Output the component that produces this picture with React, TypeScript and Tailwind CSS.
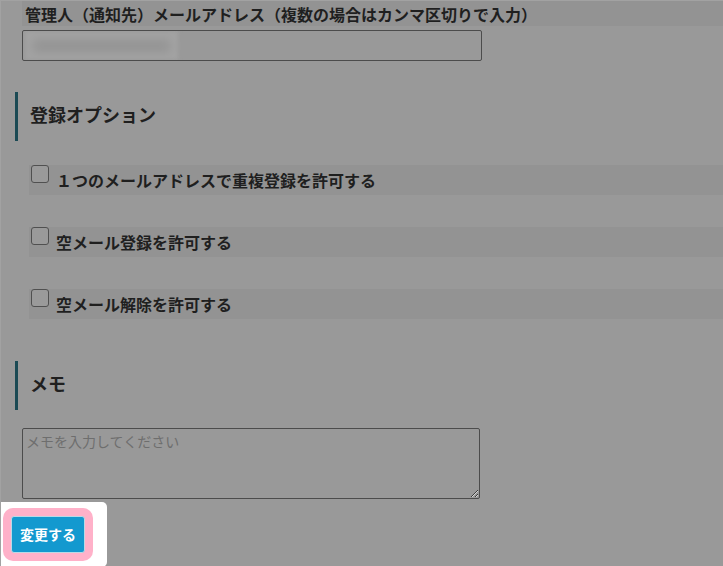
import { useState } from "react";

const options = [
  { id: "dup", label: "１つのメールアドレスで重複登録を許可する" },
  { id: "sub", label: "空メール登録を許可する" },
  { id: "unsub", label: "空メール解除を許可する" },
];

function SectionTitle({ title }: { title: string }) {
  return (
    <div className="ml-[14px] flex h-[49px] items-center border-l-[3px] border-[#1b4a54] pb-[4px] pl-[12px] text-[18px] font-bold text-[#1f1f1f]">
      {title}
    </div>
  );
}

export default function App() {
  const [checked, setChecked] = useState<Record<string, boolean>>({});
  const [memo, setMemo] = useState("");

  return (
    <div
      className="h-[566px] w-[723px] overflow-hidden border-l border-t border-[#a2a2a2] bg-[#999999] text-[#1f1f1f]"
      style={{ fontFamily: '"Noto Sans CJK JP", "Noto Sans", sans-serif' }}
    >
      <div className="ml-[21px] flex h-[25px] items-center bg-[#939393] pl-[3px] text-[16px] font-bold leading-none">
        管理人（通知先）メールアドレス（複数の場合はカンマ区切りで入力）
      </div>
      <div className="ml-[21px] mt-[4px] flex h-[31px] w-[460px] overflow-hidden rounded-[2px] border border-[#4c4c4c]">
        <div className="ml-[2px] h-full w-[153px] bg-[#a3a3a3] blur-[2px]">
          <div className="mx-[8px] mt-[9px] h-[12px] rounded-sm bg-[#939393] blur-[4px]" />
        </div>
      </div>

      <div className="mt-[31px]">
        <SectionTitle title="登録オプション" />
      </div>

      <div className="mt-[24px] flex flex-col gap-[32px]">
        {options.map((o) => (
          <label
            key={o.id}
            className="ml-[28px] flex h-[30px] cursor-pointer items-start bg-[#939393]"
          >
            <input
              type="checkbox"
              checked={!!checked[o.id]}
              onChange={(e) => setChecked({ ...checked, [o.id]: e.target.checked })}
              className="ml-[2px] mt-0 h-[18px] w-[18px] shrink-0 appearance-none rounded-[3px] border border-[#505050] bg-[#9a9a9a]"
            />
            <span className="ml-[7px] text-[16px] font-bold leading-[30px]">
              {o.label}
            </span>
          </label>
        ))}
      </div>

      <div className="mt-[42px]">
        <SectionTitle title="メモ" />
      </div>

      <textarea
        value={memo}
        onChange={(e) => setMemo(e.target.value)}
        placeholder="メモを入力してください"
        className="ml-[21px] mt-[18px] block h-[71px] w-[458px] rounded-[2px] border border-[#4c4c4c] bg-transparent px-[3px] py-[1px] text-[14px] leading-[22px] placeholder:text-[#6e6e6e] focus:outline-none"
      />

      <div className="mt-[3px] w-[106px] rounded-r-[5px] bg-white pb-[6px] pl-[2px] pt-[6px]">
        <div className="w-[90px] rounded-[10px] bg-[#ffb1c9] p-[8px]">
          <button className="h-[37px] w-[74px] rounded-[3px] border border-[#b9d9e6] bg-[#1399cf] text-[14px] font-bold text-white">
            変更する
          </button>
        </div>
      </div>
    </div>
  );
}
